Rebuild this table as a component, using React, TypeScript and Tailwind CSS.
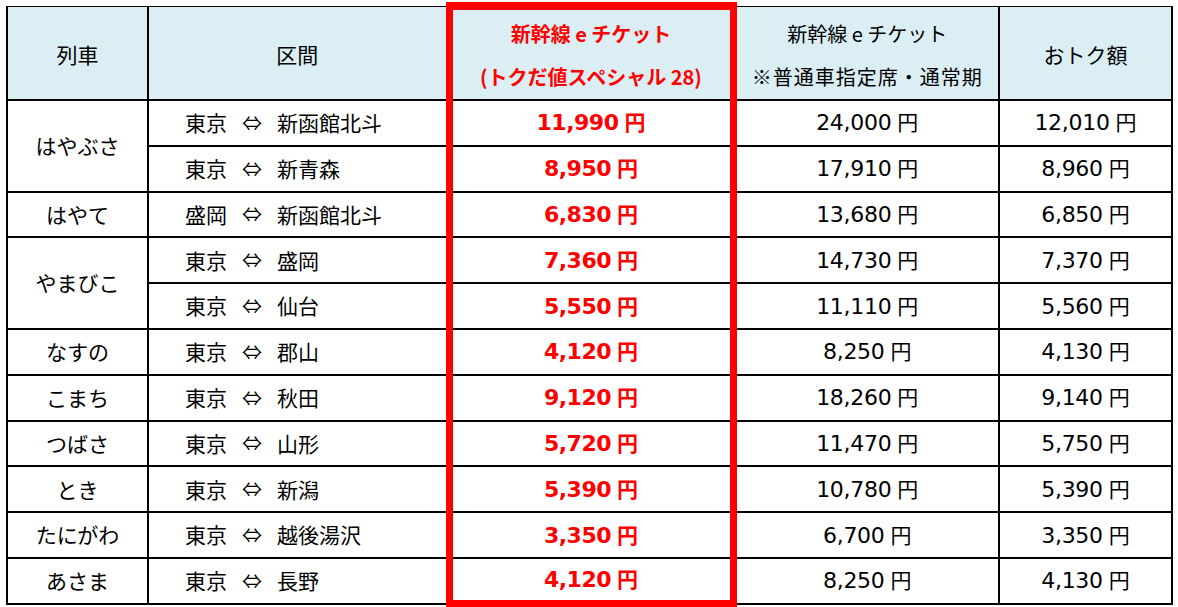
import React from "react";

type Row = {
  train?: string;
  span?: number;
  from: string;
  to: string;
  e: string;
  n: string;
  s: string;
};

const rows: Row[] = [
  { train: "はやぶさ", span: 2, from: "東京", to: "新函館北斗", e: "11,990", n: "24,000", s: "12,010" },
  { from: "東京", to: "新青森", e: "8,950", n: "17,910", s: "8,960" },
  { train: "はやて", span: 1, from: "盛岡", to: "新函館北斗", e: "6,830", n: "13,680", s: "6,850" },
  { train: "やまびこ", span: 2, from: "東京", to: "盛岡", e: "7,360", n: "14,730", s: "7,370" },
  { from: "東京", to: "仙台", e: "5,550", n: "11,110", s: "5,560" },
  { train: "なすの", span: 1, from: "東京", to: "郡山", e: "4,120", n: "8,250", s: "4,130" },
  { train: "こまち", span: 1, from: "東京", to: "秋田", e: "9,120", n: "18,260", s: "9,140" },
  { train: "つばさ", span: 1, from: "東京", to: "山形", e: "5,720", n: "11,470", s: "5,750" },
  { train: "とき", span: 1, from: "東京", to: "新潟", e: "5,390", n: "10,780", s: "5,390" },
  { train: "たにがわ", span: 1, from: "東京", to: "越後湯沢", e: "3,350", n: "6,700", s: "3,350" },
  { train: "あさま", span: 1, from: "東京", to: "長野", e: "4,120", n: "8,250", s: "4,130" },
];

const jp = "font-['Noto_Sans_CJK_JP',sans-serif]";
const num = "font-['DejaVu_Sans','Noto_Sans_CJK_JP',sans-serif]";

function Yen({ v, red }: { v: string; red?: boolean }) {
  return (
    <span className="inline-flex items-baseline">
      <span className={`${num} text-[22px] ${red ? "font-bold tracking-[-0.5px]" : "tracking-[-0.3px]"}`}>{v}</span>
      <span className={`${jp} ml-[6px] text-[21px] ${red ? "font-bold" : "font-normal"}`}>円</span>
    </span>
  );
}

export default function App() {
  return (
    <div className="min-h-screen bg-white pl-[6px] pt-[2px] text-black">
      <table className="table-fixed border-collapse text-[21px]">
        <colgroup>
          <col className="w-[141px]" />
          <col className="w-[301px]" />
          <col className="w-[284px]" />
          <col className="w-[266px]" />
          <col className="w-[173px]" />
        </colgroup>
        <thead>
          <tr className="bg-[#daeef3]">
            <th className={`${jp} h-[94px] border-2 border-t border-black pt-[4px] text-center align-middle font-normal`}>列車</th>
            <th className={`${jp} border-2 border-t border-black pt-[4px] text-center align-middle font-normal`}>区間</th>
            <th className={`${jp} border-x-[7px] border-t-[8px] border-b-2 border-x-[#ff0000] border-t-[#ff0000] border-b-black text-center align-middle font-bold text-[20px] leading-[43px] text-[#ff0000]`}>
              <div>新幹線 e チケット</div>
              <div>(トクだ値スペシャル 28)</div>
            </th>
            <th className={`${jp} border-2 border-t border-black pt-[4px] text-center align-middle font-normal text-[20px] leading-[43px]`}>
              <div>新幹線 e チケット</div>
              <div className="tracking-[1px]">※普通車指定席・通常期</div>
            </th>
            <th className={`${jp} border-2 border-t border-black pt-[4px] text-center align-middle font-normal`}>おトク額</th>
          </tr>
        </thead>
        <tbody>
          {rows.map((r, i) => {
            const last = i === rows.length - 1;
            return (
              <tr key={i}>
                {r.train && (
                  <td rowSpan={r.span} className={`${jp} border-2 border-black text-center align-middle`}>
                    {r.train}
                  </td>
                )}
                <td className={`${jp} h-[45.8px] border-2 border-black pl-[36px] align-middle`}>
                  <span className="inline-flex items-center gap-[15px]">
                    <span>{r.from}</span>
                    <span className="text-[20px]">⇔</span>
                    <span>{r.to}</span>
                  </span>
                </td>
                <td
                  className={`border-x-[7px] border-y-2 border-x-[#ff0000] border-t-black ${
                    last ? "border-b-[7px] border-b-[#ff0000]" : "border-b-black"
                  } text-center align-middle text-[#ff0000]`}
                >
                  <Yen v={r.e} red />
                </td>
                <td className="border-2 border-black text-center align-middle">
                  <Yen v={r.n} />
                </td>
                <td className="border-2 border-black text-center align-middle">
                  <Yen v={r.s} />
                </td>
              </tr>
            );
          })}
        </tbody>
      </table>
    </div>
  );
}
